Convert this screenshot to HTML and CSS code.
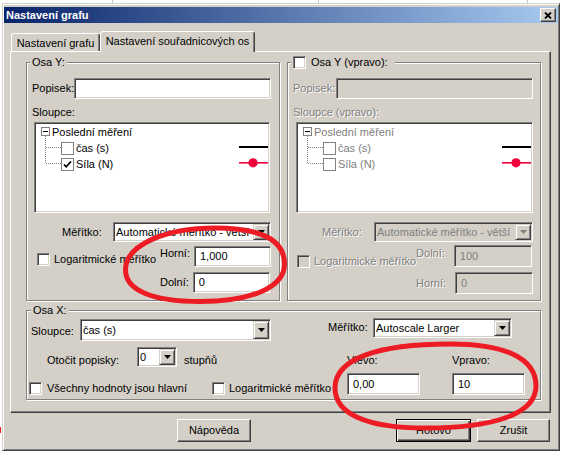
FILE: index.html
```html
<!DOCTYPE html>
<html lang="cs">
<head>
<meta charset="utf-8">
<title>Nastavení grafu</title>
<link rel="stylesheet" href="styles.css">
</head>
<body>
<div class="window">
  <div class="titlebar">
    <span class="title">Nastavení grafu</span>
    <span class="close-btn"><svg width="8" height="7" viewBox="0 0 8 7"><path d="M1 0.5L7 6.5M7 0.5L1 6.5" stroke="#000" stroke-width="1.8"/></svg></span>
  </div>
  <div class="tabs">
    <div class="tab tab-inactive">Nastavení grafu</div>
    <div class="tab tab-active">Nastavení souřadnicových os</div>
  </div>
  <div class="panel">
    <div class="yrow">
      <div class="group gy gy-left">
        <div class="legend">Osa Y:</div>
        <div class="row-popis"><span>Popisek:</span><span class="input w-popis"></span></div>
        <div class="lbl-sl">Sloupce:</div>
        <div class="tree">
          <div class="trow troot"><span class="exp"><span class="minus"></span><span class="vdot"></span></span><span class="tname">Poslední měření</span></div>
          <div class="trow"><svg class="conn" width="16" height="16"><path d="M0.5 0V16M1 7.5H16"/></svg><span class="tchk"></span><span class="tname">čas (s)</span><svg class="lg" width="29" height="16"><rect x="0" y="6" width="29" height="2" fill="#000"/></svg></div>
          <div class="trow"><svg class="conn" width="16" height="16"><path d="M0.5 0V8M1 7.5H16"/></svg><span class="tchk"><svg width="11" height="11" viewBox="0 0 11 11"><path d="M2 5.5l2.2 2.3L9 2.5" stroke="#000" stroke-width="1.8" fill="none"/></svg></span><span class="tname">Síla (N)</span><svg class="lg" width="29" height="16"><rect x="0" y="6" width="29" height="1.6" fill="#f0003c"/><circle cx="14" cy="6.8" r="4.6" fill="#f0003c"/></svg></div>
        </div>
        <div class="row-scale"><span class="lbl-scale">Měřítko:</span><span class="combo w-scale"><span class="val">Automatické měřítko - větší</span><span class="dd"><svg width="7" height="4"><path d="M0 0h7L3.5 4z"/></svg></span></span></div>
        <div class="lower">
          <div class="chkrow"><span class="chk"></span><span>Logaritmické měřítko</span></div>
          <div class="limits">
            <div class="lim lim-first"><span class="lim-lbl">Horní:</span><span class="input w-lim">1,000</span></div>
            <div class="lim"><span class="lim-lbl">Dolní:</span><span class="input w-lim">0</span></div>
          </div>
        </div>
      </div>
      <div class="group gy gy-right">
        <div class="legend legend-chk"><span class="chk"></span><span>Osa Y (vpravo):</span></div>
        <div class="row-popis"><span class="dis-t">Popisek:</span><span class="input input-dis w-popis"></span></div>
        <div class="lbl-sl dis-t">Sloupce (vpravo):</div>
        <div class="tree tree-dis">
          <div class="trow troot"><span class="exp"><span class="minus"></span><span class="vdot"></span></span><span class="tname">Poslední měření</span></div>
          <div class="trow"><svg class="conn" width="16" height="16"><path d="M0.5 0V16M1 7.5H16"/></svg><span class="tchk"></span><span class="tname">čas (s)</span><svg class="lg" width="29" height="16"><rect x="0" y="6" width="29" height="2" fill="#000"/></svg></div>
          <div class="trow"><svg class="conn" width="16" height="16"><path d="M0.5 0V8M1 7.5H16"/></svg><span class="tchk"></span><span class="tname">Síla (N)</span><svg class="lg" width="29" height="16"><rect x="0" y="6" width="29" height="1.6" fill="#f0003c"/><circle cx="14" cy="6.8" r="4.6" fill="#f0003c"/></svg></div>
        </div>
        <div class="row-scale"><span class="lbl-scale dis-t">Měřítko:</span><span class="combo combo-dis w-scale"><span class="val">Automatické měřítko - větší</span><span class="dd"><svg width="7" height="4"><path d="M0 0h7L3.5 4z"/></svg></span></span></div>
        <div class="lower">
          <div class="chkrow"><span class="chk chk-dis"></span><span class="dis-t">Logaritmické měřítko</span></div>
          <div class="limits">
            <div class="lim lim-first"><span class="lim-lbl dis-t">Dolní:</span><span class="input input-dis w-lim">100</span></div>
            <div class="lim"><span class="lim-lbl dis-t">Horní:</span><span class="input input-dis w-lim">0</span></div>
          </div>
        </div>
      </div>
    </div>
    <div class="group gx">
      <div class="legend legend-x">Osa X:</div>
      <div class="xrow1">
        <span class="x-sl">Sloupce:</span>
        <span class="combo c-xsl"><span class="val">čas (s)</span><span class="dd"><svg width="7" height="4"><path d="M0 0h7L3.5 4z"/></svg></span></span>
        <span class="x-mer">Měřítko:</span>
        <span class="combo c-xmer"><span class="val">Autoscale Larger</span><span class="dd"><svg width="7" height="4"><path d="M0 0h7L3.5 4z"/></svg></span></span>
      </div>
      <div class="xbody">
        <div class="xleft">
          <div class="xrow2">
            <span class="x-rot">Otočit popisky:</span>
            <span class="combo c-rot"><span class="val">0</span><span class="dd"><svg width="7" height="4"><path d="M0 0h7L3.5 4z"/></svg></span></span>
            <span class="x-deg">stupňů</span>
          </div>
          <div class="xrow3">
            <span class="xchk xchk-all"><span class="chk"></span><span>Všechny hodnoty jsou hlavní</span></span>
            <span class="xchk"><span class="chk"></span><span>Logaritmické měřítko</span></span>
          </div>
        </div>
        <div class="xfield xfield-left"><span class="xf-lbl">Vlevo:</span><span class="input w-x">0,00</span></div>
        <div class="xfield"><span class="xf-lbl">Vpravo:</span><span class="input w-x">10</span></div>
      </div>
    </div>
  </div>
  <div class="buttons">
    <span class="btn">Nápověda</span>
    <span class="btn btn-default">Hotovo</span>
    <span class="btn btn-cancel">Zrušit</span>
  </div>
</div>
<svg class="annot" width="561" height="451" viewBox="0 0 561 451">
  <path d="M125.5 270C125.5 245 165 228 215 228C262 228 284.5 240 284.5 264C284.5 288 250 301.5 200 301.5C152 301.5 125.5 290 125.5 270Z" fill="none" stroke="#ed1c24" stroke-width="5"/>
  <path d="M335 388C335 359 377 344 450 344C505 344 536 358 536 386C536 414 494 428 425 428C367 428 335 414 335 388Z" fill="none" stroke="#ed1c24" stroke-width="5"/>
</svg>
</body>
</html>
```

FILE: styles.css
```css
* { box-sizing: border-box; }
html, body { margin: 0; }
body {
  padding: 3px 0 0 2px;
  width: 561px;
  height: 451px;
  overflow: hidden;
  position: relative;
  background-color: #fff;
  background-image: linear-gradient(#c8c8c8, #c8c8c8), linear-gradient(#c8c8c8, #c8c8c8), linear-gradient(#c8c8c8, #c8c8c8), linear-gradient(#ed1c24, #ed1c24);
  background-position: 112px 0, 318px 0, 527px 0, 0 427px;
  background-size: 1px 3px, 1px 3px, 1px 3px, 1px 6px;
  background-repeat: no-repeat;
  font-family: "Liberation Sans", Arial, sans-serif;
  font-size: 11px;
  line-height: 13px;
  color: #000;
}

.window {
  width: 558px;
  height: 448px;
  background: #d4d0c8;
  border: 1px solid;
  border-color: #d4d0c8 #404040 #404040 #d4d0c8;
  box-shadow: inset 1px 1px #fff, inset -1px -1px #808080;
  padding: 3px 1px 1px 1px;
  display: flex;
  flex-direction: column;
}

.titlebar {
  flex: none;
  height: 16px;
  display: flex;
  align-items: center;
  padding: 0 2px;
  background: linear-gradient(to right, #0a246a, #a6caf0);
}
.title { flex: 1; color: #fff; font-weight: bold; }
.close-btn {
  width: 16px;
  height: 14px;
  background: #d4d0c8;
  border: 1px solid;
  border-color: #fff #404040 #404040 #fff;
  box-shadow: inset -1px -1px #808080;
  display: flex;
  align-items: center;
  justify-content: center;
}
.close-btn svg { display: block; }

.tabs {
  flex: none;
  display: flex;
  align-items: flex-end;
  height: 20px;
  margin: 8px 0 0 6px;
  position: relative;
  z-index: 1;
}
.tab {
  height: 18px;
  display: flex;
  align-items: center;
  justify-content: center;
  background: #d4d0c8;
  border-top: 1px solid #fff;
  border-left: 1px solid #fff;
  border-right: 1px solid #404040;
  box-shadow: inset -1px 0 #808080;
  border-radius: 3px 3px 0 0;
  white-space: nowrap;
}
.tab-inactive { width: 89px; margin-left: 1px; padding-top: 1px; }
.tab-active { width: 155px; height: 21px; margin-bottom: -1px; padding-bottom: 1px; }

.panel {
  flex: none;
  margin-left: 6px;
  width: 541px;
  height: 362px;
  border: 1px solid;
  border-color: #fff #404040 #404040 #fff;
  box-shadow: inset -1px -1px #808080;
  padding: 10px 0 0 15px;
}

.yrow { display: flex; gap: 7px; }

.group {
  border: 1px solid #808080;
  box-shadow: inset 1px 1px #fff, 1px 1px #fff;
  display: flex;
  flex-direction: column;
}
.gy { width: 254px; height: 239px; }
.gx { width: 515px; height: 90px; margin-top: 9px; }

.legend {
  align-self: flex-start;
  height: 13px;
  margin: -7px 0 0 3px;
  padding: 0 2px;
  background: #d4d0c8;
  white-space: nowrap;
}
.legend-chk { display: flex; align-items: center; gap: 5px; padding-right: 7px; }
.legend-x { margin-left: 4px; }

.dis-t { color: #808080; text-shadow: 1px 1px 0 #fff; }

.input {
  display: flex;
  align-items: center;
  height: 21px;
  background: #fff;
  border: 1px solid;
  border-color: #808080 #fff #fff #808080;
  box-shadow: inset 1px 1px #404040, inset -1px -1px #d4d0c8;
  padding-left: 5px;
  white-space: nowrap;
}
.input-dis { background: #d4d0c8; color: #808080; }

.chk {
  flex: none;
  width: 13px;
  height: 13px;
  background: #fff;
  border: 1px solid;
  border-color: #808080 #fff #fff #808080;
  box-shadow: inset 1px 1px #404040, inset -1px -1px #d4d0c8;
}
.chk-dis { background: #d4d0c8; }

.combo {
  display: flex;
  align-items: stretch;
  background: #fff;
  border: 1px solid;
  border-color: #808080 #fff #fff #808080;
  box-shadow: inset 1px 1px #404040, inset -1px -1px #d4d0c8;
  padding: 1px;
}
.combo .val {
  flex: 1;
  display: flex;
  align-items: center;
  padding-left: 1px;
  overflow: hidden;
  white-space: nowrap;
}
.combo .dd {
  flex: none;
  width: 16px;
  background: #d4d0c8;
  border: 1px solid;
  border-color: #d4d0c8 #404040 #404040 #d4d0c8;
  box-shadow: inset 1px 1px #fff, inset -1px -1px #808080;
  display: flex;
  align-items: center;
  justify-content: center;
}
.combo .dd svg { display: block; fill: #000; }
.combo-dis { background: #d4d0c8; }
.combo-dis .val { color: #808080; }
.combo-dis .dd svg { fill: #808080; }

/* Y groups */
.row-popis {
  display: flex;
  align-items: center;
  height: 21px;
  margin-top: 9px;
  padding: 0 8px 0 5px;
}
.gy-right .row-popis { padding-right: 7px; }
.w-popis { width: 197px; margin-left: auto; }

.lbl-sl { margin-top: 7px; padding-left: 5px; height: 13px; white-space: nowrap; }

.tree {
  margin: 3px 0 0 7px;
  width: 236px;
  height: 91px;
  background: #fff;
  border: 1px solid;
  border-color: #808080 #fff #fff #808080;
  box-shadow: inset 1px 1px #404040, inset -1px -1px #d4d0c8;
  padding: 1px;
}
.gy-right .tree { margin-left: 8px; width: 237px; }
.trow { display: flex; align-items: center; height: 16px; }
.troot { align-items: flex-start; padding-left: 5px; }
.troot .tname { align-self: center; margin-left: 2px; }
.exp { display: flex; flex-direction: column; padding-top: 3px; width: 9px; }
.minus {
  width: 9px;
  height: 9px;
  border: 1px solid #808080;
  background: #fff;
  display: flex;
  align-items: center;
  justify-content: center;
}
.minus::before { content: ""; width: 5px; height: 1px; background: #000; }
.vdot {
  width: 1px;
  height: 4px;
  margin-left: 4px;
  background: repeating-linear-gradient(to bottom, #808080 0 1px, transparent 1px 2px);
}
.conn { flex: none; margin-left: 9px; display: block; }
.conn path { stroke: #808080; stroke-width: 1; stroke-dasharray: 1 1; fill: none; shape-rendering: crispEdges; }
.tchk {
  flex: none;
  width: 13px;
  height: 13px;
  border: 1px solid #808080;
  background: #fff;
  display: flex;
  align-items: center;
  justify-content: center;
}
.tchk svg { display: block; }
.trow .tchk + .tname { margin-left: 2px; }
.tname { white-space: nowrap; }
.tree-dis .tname { color: #808080; }
.lg { flex: none; margin-left: auto; display: block; }

.row-scale {
  display: flex;
  align-items: center;
  height: 20px;
  margin-top: 9px;
  padding-right: 8px;
}
.gy-right .row-scale { padding-right: 7px; }
.lbl-scale { margin-left: 35px; }
.gy-right .lbl-scale { margin-left: 34px; }
.w-scale { width: 158px; height: 20px; margin-left: auto; }
.gy-right .w-scale { width: 159px; }

.lower { display: flex; margin-top: 4px; }
.gy-right .lower { margin-top: 3px; }
.chkrow {
  display: flex;
  align-items: center;
  gap: 4px;
  height: 13px;
  margin: 7px 0 0 10px;
  white-space: nowrap;
}
.gy-right .chkrow { margin: 10px 0 0 9px; }
.limits {
  margin-left: auto;
  padding-right: 8px;
  display: flex;
  flex-direction: column;
  gap: 5px;
}
.gy-right .limits { padding-right: 7px; }
.lim { display: flex; align-items: center; }
.lim-first { align-items: flex-start; }
.lim-first .lim-lbl { margin-top: 1px; }
.lim-lbl { text-align: right; margin-right: 4px; }
.gy-right .lim-lbl { margin-right: 9px; }
.gy-right .lim-first .lim-lbl { margin-top: 2px; }
.w-lim { width: 77px; }
.gy-right .w-lim { width: 78px; height: 22px; }

/* X group */
.xrow1 { display: flex; align-items: flex-start; height: 23px; margin-top: 1px; }
.x-sl { width: 49px; margin: 7px 0 0 4px; }
.c-xsl { width: 191px; height: 22px; margin-top: 1px; }
.x-mer { width: 45px; margin: 3px 0 0 57px; }
.c-xmer { width: 139px; height: 20px; }

.xbody { display: flex; margin-top: 6px; }
.xleft { width: 320px; display: flex; flex-direction: column; }
.xrow2 { display: flex; align-items: flex-start; height: 20px; }
.x-rot { width: 90px; margin: 7px 0 0 20px; white-space: nowrap; }
.c-rot { width: 40px; height: 20px; }
.x-deg { margin: 7px 0 0 7px; }
.xrow3 { display: flex; align-items: center; height: 13px; margin-top: 15px; padding-left: 2px; }
.xchk { display: flex; align-items: center; gap: 5px; white-space: nowrap; }
.xchk-all { width: 183px; }
.xchk + .xchk { gap: 4px; }
.xfield { display: flex; flex-direction: column; align-items: flex-start; }
.xfield-left { width: 105px; }
.xf-lbl { margin-top: 7px; height: 13px; }
.w-x { width: 73px; height: 22px; margin-top: 6px; }

/* buttons */
.buttons {
  flex: none;
  display: flex;
  height: 23px;
  margin-top: 6px;
  padding-left: 173px;
}
.btn {
  display: flex;
  align-items: center;
  justify-content: center;
  width: 74px;
  height: 23px;
  background: #d4d0c8;
  border: 1px solid;
  border-color: #fff #404040 #404040 #fff;
  box-shadow: inset -1px -1px #808080;
}
.btn-default {
  width: 75px;
  margin-left: 145px;
  border-color: #000;
  box-shadow: inset 1px 1px #fff, inset -1px -1px #404040, inset -2px -2px #808080;
}
.btn-cancel { width: 73px; margin-left: 6px; }

.annot {
  position: absolute;
  left: 0;
  top: 0;
  pointer-events: none;
}
```
